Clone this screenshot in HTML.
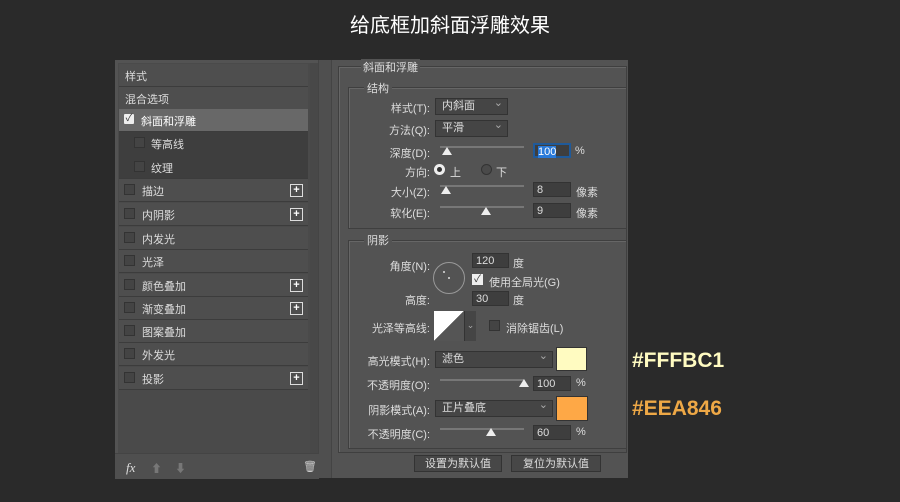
<!DOCTYPE html><html><head><meta charset="utf-8"><style>
body{margin:0;width:900px;height:502px;background:#2a2a2a;position:relative;overflow:hidden;font-family:"Liberation Sans","Noto Sans CJK SC",sans-serif;font-size:11px;color:#ddd}
.a{position:absolute}
.t{position:absolute;white-space:nowrap}
.row{position:absolute;left:119px;width:189px;height:22px;border-bottom:1px solid #3c3c3c;background:#4e4e4e}
.cb{position:absolute;width:9px;height:9px;border:1px solid #333;background:#444}
.plus{position:absolute;left:290px;width:11px;height:11px;border:1px solid #ddd;color:#fff;font-size:11px;line-height:10px;text-align:center;font-weight:bold}
.inp{position:absolute;background:#3e3e3e;border:1px solid #333;height:15px;color:#ddd;line-height:15px;padding-left:3px;box-sizing:border-box}
.sel{position:absolute;background:#454545;border:1px solid #333;height:17px;box-sizing:border-box;padding-left:6px;line-height:15px}
.sel:after{content:"⌄";position:absolute;right:4px;top:-3px;color:#aaa}
.sl{position:absolute;height:2px;background:#777}
.th{position:absolute;width:0;height:0;border-left:5px solid transparent;border-right:5px solid transparent;border-bottom:8px solid #eee}
.fs{position:absolute;border:1px solid #3f3f3f;box-shadow:1px 1px 0 #666 inset}
.btn{position:absolute;height:17px;background:#474747;border:1px solid #333;text-align:center;line-height:16px;box-sizing:border-box}
</style></head><body>
<div class="t" style="left:0;width:900px;text-align:center;top:9px;font-size:20px;color:#fff">给底框加斜面浮雕效果</div>
<div class="a" style="left:115px;top:60px;width:513px;height:418px;background:#535353"></div>
<div class="a" style="left:118px;top:63px;width:192px;height:390px;background:#4a4a4a"></div>
<div class="a" style="left:310px;top:63px;width:8px;height:390px;background:#484848"></div>
<div class="a" style="left:318px;top:60px;width:12px;height:418px;background:#4f4f4f;border-left:1px solid #444;border-right:1px solid #444"></div>
<div class="a" style="left:115px;top:453px;width:204px;height:25px;background:#4f4f4f;border-top:1px solid #444"></div>
<div class="row" style="top:64px"></div><div class="t" style="left:125px;top:68px">样式</div>
<div class="row" style="top:87px"></div><div class="t" style="left:125px;top:91px">混合选项</div>
<div class="row" style="top:109px;background:#686868"></div><div class="a" style="left:124px;top:114px;width:10px;height:10px;background:#eee;border-radius:1px;color:#333;font-size:10px;line-height:10px;text-align:center">✓</div><div class="t" style="left:141px;top:113px;color:#fff">斜面和浮雕</div>
<div class="row" style="top:132px;background:#3e3e3e;height:46px"></div>
<div class="cb" style="left:134px;top:137px"></div><div class="t" style="left:151px;top:136px">等高线</div>
<div class="cb" style="left:134px;top:161px"></div><div class="t" style="left:151px;top:160px">纹理</div>
<div class="row" style="top:179px"></div><div class="cb" style="left:124px;top:184px"></div><div class="t" style="left:142px;top:183px">描边</div><div class="plus" style="top:184px">+</div>
<div class="row" style="top:203px"></div><div class="cb" style="left:124px;top:208px"></div><div class="t" style="left:142px;top:207px">内阴影</div><div class="plus" style="top:208px">+</div>
<div class="row" style="top:227px"></div><div class="cb" style="left:124px;top:232px"></div><div class="t" style="left:142px;top:231px">内发光</div>
<div class="row" style="top:250px"></div><div class="cb" style="left:124px;top:255px"></div><div class="t" style="left:142px;top:254px">光泽</div>
<div class="row" style="top:274px"></div><div class="cb" style="left:124px;top:279px"></div><div class="t" style="left:142px;top:278px">颜色叠加</div><div class="plus" style="top:279px">+</div>
<div class="row" style="top:297px"></div><div class="cb" style="left:124px;top:302px"></div><div class="t" style="left:142px;top:301px">渐变叠加</div><div class="plus" style="top:302px">+</div>
<div class="row" style="top:320px"></div><div class="cb" style="left:124px;top:325px"></div><div class="t" style="left:142px;top:324px">图案叠加</div>
<div class="row" style="top:343px"></div><div class="cb" style="left:124px;top:348px"></div><div class="t" style="left:142px;top:347px">外发光</div>
<div class="row" style="top:367px"></div><div class="cb" style="left:124px;top:372px"></div><div class="t" style="left:142px;top:371px">投影</div><div class="plus" style="top:372px">+</div>
<div class="t" style="left:126px;top:460px;font-style:italic;font-family:'Liberation Serif',serif;font-size:13px">fx</div>
<div class="t" style="left:151px;top:460px;color:#777">⬆</div><div class="t" style="left:175px;top:460px;color:#777">⬇</div>
<div class="t" style="left:303px;top:460px;color:#ccc">🗑</div>
<div class="fs" style="left:338px;top:66px;width:287px;height:385px"></div>
<div class="t" style="left:361px;top:59px;background:#535353;padding:0 2px">斜面和浮雕</div>
<div class="fs" style="left:348px;top:87px;width:277px;height:140px"></div>
<div class="t" style="left:364px;top:80px;background:#535353;padding:0 3px">结构</div>
<div class="t" style="right:470px;top:100px">样式(T):</div><div class="sel" style="left:435px;top:98px;width:73px">内斜面</div>
<div class="t" style="right:470px;top:122px">方法(Q):</div><div class="sel" style="left:435px;top:120px;width:73px">平滑</div>
<div class="t" style="right:470px;top:145px">深度(D):</div><div class="sl" style="left:440px;top:146px;width:84px"></div><div class="th" style="left:442px;top:147px"></div>
<div class="inp" style="left:533px;top:143px;width:38px;border:2px solid #1f5a9a"><span style="background:#2a7ad9;color:#fff">100</span></div><div class="t" style="left:575px;top:145px">%</div>
<div class="t" style="right:470px;top:164px">方向:</div>
<div class="a" style="left:434px;top:164px;width:11px;height:11px;border-radius:50%;background:#eee"><div class="a" style="left:3px;top:3px;width:5px;height:5px;border-radius:50%;background:#333"></div></div><div class="t" style="left:450px;top:164px">上</div>
<div class="a" style="left:481px;top:164px;width:9px;height:9px;border-radius:50%;border:1px solid #333;background:#4a4a4a"></div><div class="t" style="left:496px;top:164px">下</div>
<div class="t" style="right:470px;top:184px">大小(Z):</div><div class="sl" style="left:440px;top:185px;width:84px"></div><div class="th" style="left:441px;top:186px"></div>
<div class="inp" style="left:533px;top:182px;width:38px">8</div><div class="t" style="left:576px;top:184px">像素</div>
<div class="t" style="right:470px;top:205px">软化(E):</div><div class="sl" style="left:440px;top:206px;width:84px"></div><div class="th" style="left:481px;top:207px"></div>
<div class="inp" style="left:533px;top:203px;width:38px">9</div><div class="t" style="left:576px;top:205px">像素</div>
<div class="fs" style="left:348px;top:240px;width:277px;height:207px"></div>
<div class="t" style="left:364px;top:232px;background:#535353;padding:0 3px">阴影</div>
<div class="t" style="right:470px;top:258px">角度(N):</div>
<div class="a" style="left:433px;top:262px;width:30px;height:30px;border-radius:50%;border:1px solid #999"><div class="a" style="left:9px;top:8px;width:2px;height:2px;background:#bbb"></div><div class="a" style="left:14px;top:14px;width:2px;height:2px;background:#bbb"></div></div>
<div class="inp" style="left:472px;top:253px;width:37px">120</div><div class="t" style="left:513px;top:255px">度</div>
<div class="a" style="left:472px;top:274px;width:11px;height:11px;background:#eee;color:#333;font-size:10px;line-height:11px;text-align:center">✓</div><div class="t" style="left:489px;top:274px">使用全局光(G)</div>
<div class="t" style="right:470px;top:292px">高度:</div><div class="inp" style="left:472px;top:291px;width:37px">30</div><div class="t" style="left:513px;top:292px">度</div>
<div class="t" style="right:470px;top:320px">光泽等高线:</div>
<div class="a" style="left:434px;top:311px;width:30px;height:30px;background:linear-gradient(to bottom right,#fff 50%,#555 50%)"></div>
<div class="a" style="left:464px;top:311px;width:11px;height:30px;background:#454545;border-left:1px solid #333;color:#aaa;font-size:9px;text-align:center;line-height:28px">⌄</div>
<div class="cb" style="left:489px;top:320px"></div><div class="t" style="left:506px;top:320px">消除锯齿(L)</div>
<div class="t" style="right:470px;top:353px">高光模式(H):</div><div class="sel" style="left:435px;top:351px;width:118px">滤色</div>
<div class="a" style="left:556px;top:347px;width:31px;height:24px;background:#fffbc1;border:1px solid #333;box-sizing:border-box"></div>
<div class="t" style="right:470px;top:377px">不透明度(O):</div><div class="sl" style="left:440px;top:379px;width:84px"></div><div class="th" style="left:519px;top:379px"></div>
<div class="inp" style="left:533px;top:376px;width:38px">100</div><div class="t" style="left:576px;top:377px">%</div>
<div class="t" style="right:470px;top:402px">阴影模式(A):</div><div class="sel" style="left:435px;top:400px;width:118px">正片叠底</div>
<div class="a" style="left:556px;top:396px;width:32px;height:25px;background:#fea846;border:1px solid #333;box-sizing:border-box"></div>
<div class="t" style="right:470px;top:426px">不透明度(C):</div><div class="sl" style="left:440px;top:428px;width:84px"></div><div class="th" style="left:486px;top:428px"></div>
<div class="inp" style="left:533px;top:425px;width:38px">60</div><div class="t" style="left:576px;top:426px">%</div>
<div class="btn" style="left:414px;top:455px;width:88px">设置为默认值</div>
<div class="btn" style="left:511px;top:455px;width:90px">复位为默认值</div>
<div class="t" style="left:632px;top:349px;font-size:21px;font-weight:bold;color:#fffbc1">#FFFBC1</div>
<div class="t" style="left:632px;top:397px;font-size:21px;font-weight:bold;color:#eea846">#EEA846</div>
</body></html>
